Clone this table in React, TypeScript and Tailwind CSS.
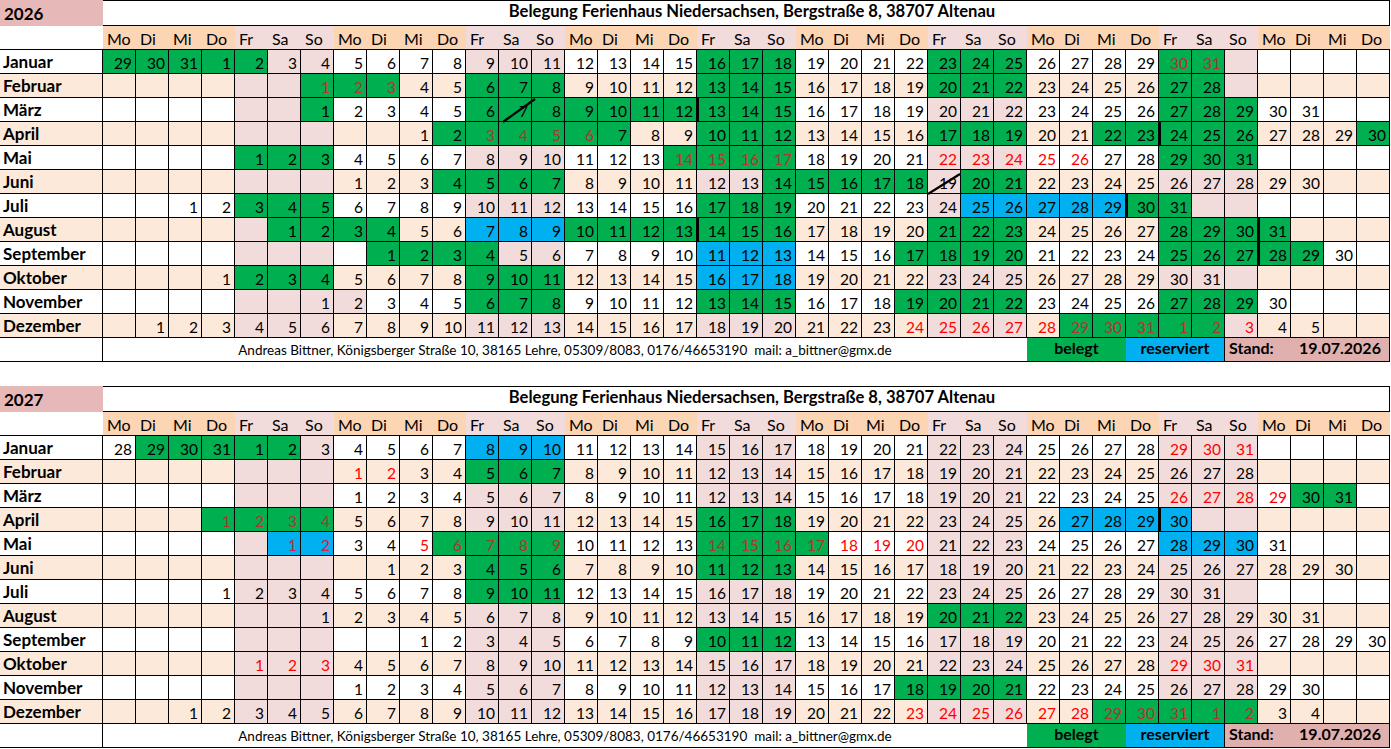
import React from "react";

type MonthSpec = {
  name: string;
  a: number;
  len: number;
  prev?: number[];
  next?: number;
  green?: string;
  blue?: string;
  red?: string;
  pink?: string;
  thick?: string;
  slash?: string;
};

type Cell = { label: string; key: string } | null;

const DAYS = ["Mo", "Di", "Mi", "Do", "Fr", "Sa", "So"];
const COLS = 39;

const Y2026: MonthSpec[] = [
  { name: "Januar", a: 4, len: 31, prev: [29, 30, 31], green: "p29 p30 p31 1 2 16-18 23-25 30 31", red: "30 31" },
  { name: "Februar", a: 7, len: 28, green: "1-3 6-8 13-15 20-22 27 28", red: "1-3" },
  { name: "März", a: 7, len: 31, green: "1 6-15 27-29", thick: "13", slash: "7" },
  { name: "April", a: 10, len: 30, green: "2-7 10-12 17-19 22-26 30", red: "3-6", thick: "24" },
  { name: "Mai", a: 5, len: 31, green: "1-3 14-17 29-31", red: "14-17 22-26" },
  { name: "Juni", a: 8, len: 30, green: "4-7 14-18 20 21", slash: "19" },
  { name: "Juli", a: 3, len: 31, green: "3-5 17-19 30 31", blue: "25-29", thick: "30" },
  { name: "August", a: 6, len: 31, green: "1-4 10-16 21-23 28-31", blue: "7-9", thick: "14 31" },
  { name: "September", a: 9, len: 30, green: "1-4 17-20 25-29", blue: "11-13", thick: "28" },
  { name: "Oktober", a: 4, len: 31, green: "2-4 9-11", blue: "16-18" },
  { name: "November", a: 7, len: 30, green: "6-8 13-15 19-22 27-29", pink: "2" },
  { name: "Dezember", a: 2, len: 31, next: 5, green: "29-31 n1 n2", red: "24-31 n1 n2 n3" },
];

const Y2027: MonthSpec[] = [
  { name: "Januar", a: 5, len: 31, prev: [28, 29, 30, 31], green: "p29 p30 p31 1 2", blue: "8-10", red: "29-31" },
  { name: "Februar", a: 8, len: 28, green: "5-7", red: "1 2" },
  { name: "März", a: 8, len: 31, green: "30 31", red: "26-29" },
  { name: "April", a: 4, len: 30, green: "1-4 16-18", blue: "27-30", red: "1-4", thick: "30" },
  { name: "Mai", a: 6, len: 31, green: "6-9 14-17", blue: "1 2 28-30", red: "1 2 5-9 14-20" },
  { name: "Juni", a: 9, len: 30, green: "4-6 11-13" },
  { name: "Juli", a: 4, len: 31, green: "9-11" },
  { name: "August", a: 7, len: 31, green: "20-22" },
  { name: "September", a: 10, len: 30, green: "10-12" },
  { name: "Oktober", a: 5, len: 31, red: "1-3 29-31" },
  { name: "November", a: 8, len: 30, green: "18-21" },
  { name: "Dezember", a: 3, len: 31, next: 4, green: "29-31 n1 n2", red: "23-31 n1 n2" },
];

function keys(spec?: string): Set<string> {
  const out = new Set<string>();
  if (!spec) return out;
  for (const tok of spec.split(/\s+/).filter(Boolean)) {
    const m = tok.match(/^(\d+)-(\d+)$/);
    if (m) {
      for (let i = +m[1]; i <= +m[2]; i++) out.add(String(i));
    } else out.add(tok);
  }
  return out;
}

function buildCells(m: MonthSpec): Cell[] {
  const cells: Cell[] = Array.from({ length: COLS }, () => null);
  (m.prev ?? []).forEach((n, i) => {
    cells[m.a - 1 - (m.prev!.length - i)] = { label: String(n), key: "p" + n };
  });
  for (let n = 1; n <= m.len; n++) cells[m.a - 2 + n] = { label: String(n), key: String(n) };
  for (let i = 1; i <= (m.next ?? 0); i++) cells[m.a - 2 + m.len + i] = { label: String(i), key: "n" + i };
  return cells;
}

function DayCell({ cell, col, peachRow, m }: { cell: Cell; col: number; peachRow: boolean; m: MonthSpec }) {
  const weekend = col % 7 >= 4;
  const k = cell?.key ?? "";
  const green = cell && keys(m.green).has(k);
  const blue = cell && keys(m.blue).has(k);
  const pink = cell && keys(m.pink).has(k);
  const red = cell && keys(m.red).has(k);
  const thick = cell && keys(m.thick).has(k);
  const slash = cell && m.slash === k;

  let bg = peachRow ? "bg-[#fde9d9]" : "bg-white";
  if (weekend || pink) bg = "bg-[#f2dcdb]";
  if (green) bg = "bg-[#00b050]";
  if (blue) bg = "bg-[#00b0f0]";

  let color = "text-black";
  if (red) color = green ? "text-[#b0362a]" : blue ? "text-[#d8203a]" : "text-[#ff0000]";

  return (
    <div
      className={`relative flex h-[24px] items-end justify-end border-r border-b border-black pr-[3px] pb-[2px] text-[15.5px] leading-none ${bg} ${color} ${
        thick ? "border-l-2 border-l-black" : ""
      }`}
    >
      {cell?.label}
      {slash && (
        <svg className="pointer-events-none absolute inset-0 z-10 h-[24px] w-[33px] overflow-visible" viewBox="0 0 33 24">
          {m.name === "März" ? (
            <line x1="4" y1="24" x2="36" y2="1" stroke="black" strokeWidth="2.2" />
          ) : (
            <line x1="0" y1="24" x2="32" y2="4" stroke="black" strokeWidth="2.2" />
          )}
        </svg>
      )}
    </div>
  );
}

function Block({ year, months }: { year: string; months: MonthSpec[] }) {
  return (
    <div className="grid grid-cols-[103px_repeat(39,33px)]">
      <div className="flex h-[26px] items-end bg-[#e6b8b7] pb-[4px] pl-[4px] text-[17px] font-bold leading-none">{year}</div>
      <div className="col-span-39 flex h-[26px] items-end justify-center border-t border-r border-b border-black pb-[5px] pl-[12px] text-[16.6px] font-bold leading-none">
        Belegung Ferienhaus Niedersachsen, Bergstraße 8, 38707 Altenau
      </div>

      <div className="h-[24px] border-b border-black bg-white" />
      {Array.from({ length: COLS }, (_, i) => (
        <div
          key={i}
          className={`flex h-[24px] items-end border-b border-black pb-[2px] pl-[4px] text-[16px] leading-none ${
            i % 7 >= 4 ? "bg-[#f2dcdb]" : "bg-[#fcd5b4]"
          }`}
        >
          {DAYS[i % 7]}
        </div>
      ))}

      {months.map((m, r) => {
        const peachRow = r % 2 === 1;
        const cells = buildCells(m);
        return (
          <React.Fragment key={m.name}>
            <div
              className={`flex h-[24px] items-end border-r border-b border-black pb-[3px] pl-[3px] text-[17px] font-bold leading-none ${
                peachRow ? "bg-[#fde9d9]" : "bg-white"
              }`}
            >
              {m.name}
            </div>
            {cells.map((c, i) => (
              <DayCell key={i} cell={c} col={i} peachRow={peachRow} m={m} />
            ))}
          </React.Fragment>
        );
      })}

      <div className="h-[24px] border-r border-b border-black bg-white" />
      <div className="col-span-28 flex h-[24px] items-end justify-center border-b border-black bg-white pb-[4px] text-[13.5px] leading-none">
        Andreas Bittner, Königsberger Straße 10, 38165 Lehre, 05309/8083, 0176/46653190&nbsp;&nbsp;mail: a_bittner@gmx.de
      </div>
      <div className="col-span-3 flex h-[24px] items-end justify-center border-b border-black bg-[#00b050] pb-[5px] text-[16px] font-bold leading-none">
        belegt
      </div>
      <div className="col-span-3 flex h-[24px] items-end justify-center border-r border-b border-black bg-[#00b0f0] pb-[5px] text-[16px] font-bold leading-none">
        reserviert
      </div>
      <div className="col-span-2 flex h-[24px] items-end border-b border-black bg-[#e0b0af] pb-[5px] pl-[4px] text-[16px] font-bold leading-none">
        Stand:
      </div>
      <div className="col-span-3 flex h-[24px] items-end justify-center border-r border-b border-black bg-[#e0b0af] pb-[5px] text-[16px] font-bold leading-none">
        19.07.2026
      </div>
    </div>
  );
}

export default function App() {
  return (
    <div className="h-[749px] w-[1391px] overflow-hidden bg-white font-[Lato,sans-serif] text-black">
      <Block year="2026" months={Y2026} />
      <div className="h-[24px]" />
      <Block year="2027" months={Y2027} />
    </div>
  );
}
